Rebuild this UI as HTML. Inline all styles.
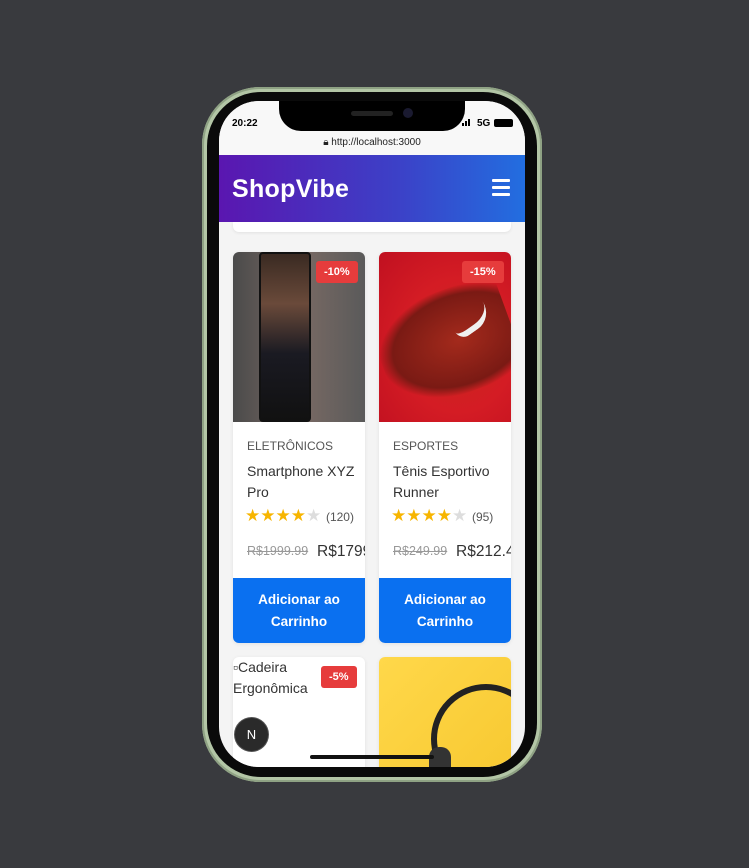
<!DOCTYPE html>
<html><head><style>
*{margin:0;padding:0;box-sizing:border-box}
body{width:749px;height:868px;background:#393a3e;position:relative;overflow:hidden;font-family:"Liberation Sans",sans-serif}
.frame{position:absolute;left:202px;top:87px;width:340px;height:695px;border-radius:58px;background:#b3c6a6;box-shadow:inset 0 0 0 2px #8fa284}
.bezel{position:absolute;left:207px;top:92px;width:330px;height:685px;border-radius:54px;background:#0a0a0a}
.screen{position:absolute;left:219px;top:101px;width:306px;height:666px;border-radius:40px;background:#f4f4f4;overflow:hidden}
.notch{position:absolute;left:60px;top:0;width:186px;height:30px;background:#000;border-radius:0 0 22px 22px}
.status{position:absolute;top:0;left:0;width:306px;height:34px;background:#f8f8f8}
.url{position:absolute;top:34px;left:0;width:306px;height:20px;background:#f8f8f8;font-size:10px;text-align:center;color:#222;line-height:16px}
.hdr{position:absolute;top:54px;left:0;width:306px;height:67px;background:linear-gradient(90deg,#5a16b0,#3b42c8 60%,#226ee0)}
.hdr b{position:absolute;left:13px;top:20px;color:#fff;font-size:25px;letter-spacing:.3px}
.card{position:absolute;width:132px;background:#fff;border-radius:6px;overflow:hidden;box-shadow:0 1px 4px rgba(0,0,0,.08)}
.cat{position:absolute;left:14px;font-size:12px;color:#555}
.nm{position:absolute;left:14px;font-size:14px;color:#333;line-height:21px}
.st{position:absolute;left:12px;font-size:17px;letter-spacing:0}
.old{position:absolute;left:14px;font-size:12.5px;color:#999;text-decoration:line-through}
.new{position:absolute;font-size:15.5px;color:#333;white-space:nowrap}
.btn{position:absolute;left:0;width:132px;height:65px;background:#0a70f0;color:#fff;font-weight:bold;font-size:13.5px;text-align:center;line-height:22px;padding-top:11px}
.badge{position:absolute;background:#e63c3c;color:#fff;font-size:11px;font-weight:bold;padding:5px 8px;border-radius:3px}
</style></head><body>
<div class="frame"></div><div class="bezel"></div>
<div class="screen">
 <div class="status"></div>
 <div class="notch"><div style="position:absolute;left:72px;top:10px;width:42px;height:5px;border-radius:3px;background:#222"></div><div style="position:absolute;left:124px;top:7px;width:10px;height:10px;border-radius:50%;background:#1a1a30"></div></div>
 <div style="position:absolute;left:13px;top:17px;font-size:10px;font-weight:bold">20:22</div>
 <div style="position:absolute;left:243px;top:22px;width:2px;height:3px;background:#000"></div>
 <div style="position:absolute;left:246px;top:20px;width:2px;height:5px;background:#000"></div>
 <div style="position:absolute;left:249px;top:18px;width:2px;height:7px;background:#000"></div>
 <div style="position:absolute;left:258px;top:17px;font-size:10px;font-weight:bold">5G</div>
 <div style="position:absolute;left:275px;top:18px;width:19px;height:8px;border:1px solid #000;border-radius:2px;background:#000"></div>
 <div class="url">🔒︎ http://localhost:3000</div>
 <div class="hdr"><b>ShopVibe</b>
  <div style="position:absolute;left:273px;top:24px;width:18px;height:3px;background:#fff;box-shadow:0 7px 0 #fff,0 14px 0 #fff;border-radius:1px"></div></div>
 <div style="position:absolute;left:14px;top:121px;width:278px;height:10px;background:#fff;border-radius:0 0 6px 6px;box-shadow:0 1px 3px rgba(0,0,0,.08)"></div>

 <div class="card" style="left:14px;top:151px;height:391px">
  <div style="position:absolute;left:0;top:0;width:132px;height:170px;background:linear-gradient(90deg,#4a4a4a,#7a6a64 50%,#5a5a5a)"></div>
  <div style="position:absolute;left:26px;top:0;width:52px;height:170px;background:linear-gradient(#3a2a22,#6a4a3a 30%,#1a1a22 60%,#111);border:2px solid #111;border-radius:4px"></div>
  <div class="badge" style="left:83px;top:9px">-10%</div>
  <div class="cat" style="top:187px">ELETRÔNICOS</div>
  <div class="nm" style="top:209px">Smartphone XYZ<br>Pro</div>
  <div class="st" style="top:254px"><span style="color:#f7b500">★★★★</span><span style="color:#ddd">★</span> <span style="font-size:12px;color:#555">(120)</span></div>
  <div class="old" style="top:292px">R$1999.99</div>
  <div class="new" style="left:84px;top:291px">R$1799</div>
  <div class="btn" style="top:326px">Adicionar ao<br>Carrinho</div>
 </div>

 <div class="card" style="left:160px;top:151px;height:391px">
  <div style="position:absolute;left:0;top:0;width:132px;height:170px;background:radial-gradient(ellipse at 60% 55%,#c8281e,#d41c24 50%,#c01020)"></div>
  <div style="position:absolute;left:0;top:40px;width:135px;height:105px;background:radial-gradient(ellipse at 60% 50%,#a42a1c,#7a1a14 60%,transparent 72%);transform:rotate(-20deg)"></div>
  <div style="position:absolute;left:70px;top:50px;width:40px;height:30px;border-bottom:6px solid #f0f0f0;border-radius:0 0 20px 10px;transform:rotate(-35deg)"></div>
  <div class="badge" style="left:83px;top:9px">-15%</div>
  <div class="cat" style="top:187px">ESPORTES</div>
  <div class="nm" style="top:209px">Tênis Esportivo<br>Runner</div>
  <div class="st" style="top:254px"><span style="color:#f7b500">★★★★</span><span style="color:#ddd">★</span> <span style="font-size:12px;color:#555">(95)</span></div>
  <div class="old" style="top:292px">R$249.99</div>
  <div class="new" style="left:77px;top:291px">R$212.4</div>
  <div class="btn" style="top:326px">Adicionar ao<br>Carrinho</div>
 </div>

 <div class="card" style="left:14px;top:556px;height:130px">
  <div style="position:absolute;left:0;top:0;font-size:14px;color:#333;line-height:21px">▫Cadeira<br>Ergonômica</div>
  <div class="badge" style="left:88px;top:9px">-5%</div>
 </div>
 <div class="card" style="left:160px;top:556px;height:130px;background:linear-gradient(135deg,#ffd84a,#f7c830)">
  <div style="position:absolute;left:52px;top:27px;width:110px;height:110px;border:6px solid #222;border-radius:50%"></div>
  <div style="position:absolute;left:50px;top:90px;width:22px;height:40px;background:#333;border-radius:10px"></div>
 </div>
 <div style="position:absolute;left:16px;top:617px;width:33px;height:33px;border-radius:50%;background:#2a2a2a;color:#fff;font-size:13px;text-align:center;line-height:33px;box-shadow:0 0 0 1px #555">N</div>
 <div style="position:absolute;left:91px;top:654px;width:124px;height:4px;border-radius:2px;background:#111"></div>
</div>
</body></html>
